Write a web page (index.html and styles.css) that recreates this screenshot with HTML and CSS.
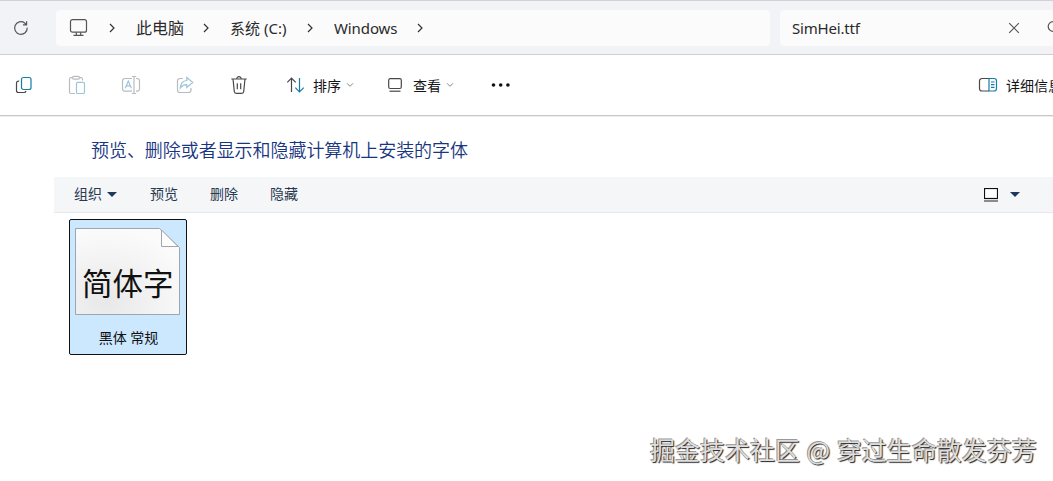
FILE: index.html
```html
<!DOCTYPE html>
<html lang="zh-CN">
<head>
  <meta charset="UTF-8">
  <title>Fonts</title>
  <link rel="stylesheet" href="styles.css">
</head>
<body>
  <header class="nav-bar">
    <svg class="refresh" width="16" height="16" viewBox="0 0 16 16"><path d="M14.2 7.6A6.3 6.3 0 1 1 11.7 3l1.8 1.8M13.6 1.3v3.6H10"/></svg>
    <div class="address">
      <svg class="pc" width="20" height="20" viewBox="0 0 20 20"><rect x="2.5" y="1.7" width="16" height="12.5" rx="2"/><path d="M8.3 14.2v3M12.7 14.2v3M5.5 17.3h10"/></svg>
      <svg class="chev" width="6" height="10" viewBox="0 0 6 10"><path d="M1 1l4 4-4 4"/></svg>
      <span class="crumb crumb-pc">此电脑</span>
      <svg class="chev" width="6" height="10" viewBox="0 0 6 10"><path d="M1 1l4 4-4 4"/></svg>
      <span class="crumb crumb-drive">系统 (C:)</span>
      <svg class="chev" width="6" height="10" viewBox="0 0 6 10"><path d="M1 1l4 4-4 4"/></svg>
      <span class="crumb crumb-win">Windows</span>
      <svg class="chev" width="6" height="10" viewBox="0 0 6 10"><path d="M1 1l4 4-4 4"/></svg>
    </div>
    <div class="search">
      <span class="query">SimHei.ttf</span>
      <svg class="clear" width="12" height="12" viewBox="0 0 12 12"><path d="M1.2 1.2l9.6 9.6M10.8 1.2l-9.6 9.6"/></svg>
      <svg class="magnifier" width="16" height="16" viewBox="0 0 16 16"><circle cx="6" cy="6.5" r="4.8"/><path d="M9.5 10l5 5"/></svg>
    </div>
  </header>

  <div class="toolbar">
    <svg class="tool copy" width="18" height="18" viewBox="0 0 18 18"><path class="dark" d="M4.2 5.2H3.5a2 2 0 0 0-2 2v7.3a2 2 0 0 0 2 2H9a2 2 0 0 0 2-1.5"/><rect class="blue" x="6.5" y="1.5" width="9.5" height="12" rx="2"/></svg>
    <svg class="tool" width="18" height="20" viewBox="0 0 18 20"><path class="pale" d="M7 18.500H3A1.500 1.500 0 0 1 1.500 17V4.200A1.500 1.500 0 0 1 3 2.700h1.500M11.500 2.700H13a1.500 1.500 0 0 1 1.500 1.500v1.300"/><rect class="pale" x="4.500" y="1.300" width="7" height="2.800" rx="1.400"/><rect class="pale-blue" x="8.500" y="7.300" width="8" height="11.200" rx="1.300"/></svg>
    <svg class="tool" width="20" height="20" viewBox="0 0 20 20"><path class="pale" d="M11 16.200H4a2.500 2.500 0 0 1-2.500-2.500V6A2.500 2.500 0 0 1 4 3.500h7M15 3.500h1A2.500 2.500 0 0 1 18.500 6v7.700a2.500 2.500 0 0 1-2.500 2.500h-1M10.800 1.500h4.400M10.800 18.500h4.400M13 1.500v17"/><path class="pale-blue" d="M4.200 13.300L7.300 6l3.100 7.300M5.300 10.800h4"/></svg>
    <svg class="tool" width="18" height="18" viewBox="0 0 18 18"><path class="pale" d="M7 2.500H4A2.500 2.500 0 0 0 1.500 5v9A2.500 2.500 0 0 0 4 16.500h8.500A2.500 2.500 0 0 0 15 14v-2"/><path class="pale-blue" d="M10.800 1.500l6 5-6 5V8.700C7.500 8.500 6 9.500 4.300 12c.3-4.300 2.500-7.200 6.500-7.500z"/></svg>
    <svg class="tool" width="18" height="20" viewBox="0 0 18 20"><path class="dark" d="M1.300 4h15.400M6.700 4a2.300 2.300 0 0 1 4.600 0M3 4l1.300 12.500a2 2 0 0 0 2 1.800h5.400a2 2 0 0 0 2-1.800L15 4M7.300 8.200v6M10.700 8.200v6"/></svg>
    <i class="divider"></i>
    <svg class="sort" width="20" height="18" viewBox="0 0 20 18"><path class="dark" d="M5.500 16V2.200M1.300 6.300l4.200-4.200 4.200 4.200"/><path class="blue" d="M13.500 2v13.800M9.300 11.700l4.200 4.200 4.200-4.200"/></svg>
    <span class="tool-text">排序</span>
    <svg class="drop" width="8" height="6" viewBox="0 0 8 6"><path d="M1 1.300l3 3 3-3"/></svg>
    <svg class="view" width="16" height="16" viewBox="0 0 16 16"><rect class="dark" x="1.700" y="1.700" width="12.600" height="9.800" rx="1.500"/><path class="dark" d="M2.500 14.200h11"/></svg>
    <span class="tool-text">查看</span>
    <svg class="drop" width="8" height="6" viewBox="0 0 8 6"><path d="M1 1.300l3 3 3-3"/></svg>
    <i class="divider divider-more"></i>
    <svg class="more" width="20" height="4" viewBox="0 0 20 4"><circle cx="2.500" cy="2" r="1.800"/><circle cx="9.700" cy="2" r="1.800"/><circle cx="16.900" cy="2" r="1.800"/></svg>
    <div class="details">
      <svg width="20" height="16" viewBox="0 0 20 16"><path class="dark" d="M11 1.500H4A2.500 2.500 0 0 0 1.500 4v7.500A2.500 2.500 0 0 0 4 14h7"/><path class="blue" d="M11 1.500h5A2.500 2.500 0 0 1 18.500 4v7.500A2.500 2.500 0 0 1 16 14h-5zM13 5h3.500M13 7.700h3.500M13 10.400h3.500"/></svg>
      <span class="tool-text">详细信息</span>
    </div>
  </div>

  <main class="content">
    <h1>预览、删除或者显示和隐藏计算机上安装的字体</h1>
    <div class="commands">
      <span class="organize">组织</span>
      <i class="triangle"></i>
      <span>预览</span>
      <span>删除</span>
      <span>隐藏</span>
      <svg class="view-mode" width="14" height="14" viewBox="0 0 14 14"><rect x=".5" y=".5" width="13" height="10"/><path d="M0 13h14"/></svg>
      <i class="triangle triangle-view"></i>
    </div>
    <div class="font-item">
      <div class="sheet">
        <svg class="page" width="108" height="90" viewBox="0 0 108 90">
          <defs>
            <radialGradient id="paper" cx=".3" cy=".85" r=".85">
              <stop offset="0" stop-color="#e9e8e9"/>
              <stop offset="1" stop-color="#fbfbfb"/>
            </radialGradient>
          </defs>
          <path d="M1.500 1.500h84l20 19v67h-104z" fill="url(#paper)" stroke="#9aa7b3"/>
          <path d="M87.500 3v16.500H104z" fill="#fdfdfd" stroke="#a5a5a8"/>
        </svg>
        <span class="sample">简体字</span>
      </div>
      <div class="font-name">黑体 常规</div>
    </div>
  </main>
  <div class="watermark">掘金技术社区 @ 穿过生命散发芬芳</div>
</body>
</html>
```
FILE: styles.css
```css
* { box-sizing: border-box; }
body {
  margin: 0;
  width: 1053px;
  height: 481px;
  overflow: hidden;
  position: relative;
  background: #fff;
  color: #2a2a2a;
  font-family: "Noto Sans", "Noto Sans CJK SC", sans-serif;
}
svg { display: block; flex: none; fill: none; stroke: #555; stroke-width: 1.2; }
span { white-space: nowrap; }

.nav-bar {
  display: flex;
  height: 55px;
  padding-top: 9px;
  background: #f2f3f6;
  border-top: 1px solid #d2d2d5;
  border-bottom: 1px solid #cfcfd1;
}
.refresh { margin: 10px 27px 0 13px; }
.address {
  display: flex; align-items: center;
  width: 714px; height: 36px; flex: none;
  padding-left: 12px;
  background: #fbfbfc; border-radius: 4px;
}
.chev { margin: 0 21px; stroke: #333; }
.crumb { flex: none; font-size: 15px; line-height: 20px; }
.crumb-pc { width: 46px; font-size: 16px; }
.crumb-drive { width: 56px; }
.crumb-win { width: 62px; letter-spacing: -.1px; }
.search {
  display: flex; align-items: center; flex: none;
  width: 290px; height: 36px; margin-left: 10px; padding-left: 12px;
  background: #fbfbfc; border-radius: 4px;
}
.query { width: 216px; font-size: 15px; letter-spacing: -.2px; }
.magnifier { margin-left: 27px; }

.toolbar {
  display: flex; align-items: center;
  height: 61px;
  padding-left: 15px;
  border-bottom: 1px solid #c8c8c8;
  box-shadow: 0 1px 0 #eee;
}
.tool { margin-right: 36px; }
.tool:nth-child(1), .tool:nth-child(2), .tool:nth-child(3) { margin-right: 35px; }
.tool:nth-child(5) { margin-right: 20px; }
.toolbar .dark { stroke: #484848; }
.toolbar .blue { stroke: #167da8; }
.toolbar .pale { stroke: #b8bcc0; }
.toolbar .pale-blue { stroke: #9cc5da; }
.divider { width: 1px; height: 36px; background: #e6e6e6; }
.sort { margin: 0 7px 0 18px; }
.tool-text { padding-top: 1px; font-size: 14px; line-height: 20px; color: #151515; }
.drop { margin-left: 5px; stroke: #888; stroke-width: 1; }
.view { margin: 0 10px 0 33px; }
.divider-more { margin-left: 19px; }
.more { margin-left: 18px; fill: #111; stroke: none; }
.details { display: flex; align-items: center; gap: 8px; margin-left: 467px; }

.content { padding-left: 54px; }
h1 {
  margin: 0; padding: 21px 0 0 37px;
  height: 61px;
  font-size: 18px; font-weight: 350; line-height: 26px; letter-spacing: -.05px;
  color: #173580;
}
.commands {
  display: flex; align-items: center;
  height: 36px; padding-left: 20px;
  background: #f4f6f8;
  border-bottom: 1px solid #e5e8ec;
  font-size: 14px; color: #2a3850;
}
.commands span { margin-right: 32px; padding-bottom: 3px; }
.commands .organize { margin-right: 5px; }
.triangle {
  margin-right: 33px;
  border: 5px solid transparent;
  border-top-color: #1d3761; border-bottom: 0;
}
.view-mode { margin-left: 654px; stroke: #222; stroke-width: 1; }
.view-mode rect { fill: #fff; stroke: #111; stroke-width: 1.2; }
.triangle-view { margin: 0 0 0 12px; }

.font-item {
  width: 118px; height: 136px;
  margin: 6px 0 0 15px; padding: 7px 0 0 4px;
  background: #cce8ff;
  border: 1px solid #111; border-radius: 2px;
}
.sheet { display: grid; width: 108px; height: 90px; }
.sheet > * { grid-area: 1 / 1; }
.page { stroke-width: 1; }
.sample { padding: 34px 0 0 8px; font-size: 30.5px; line-height: 44px; color: #111; }
.font-name { margin: 11px 3px 0 0; font-size: 14px; line-height: 20px; text-align: center; color: #111; }

.watermark {
  position: absolute; left: 650px; top: 431px;
  font-family: "Noto Sans CJK SC", sans-serif;
  font-size: 25px; line-height: 36px; white-space: nowrap;
  word-spacing: 1px;
  color: #dedede;
  text-shadow: 1px 1px 1px #222, -1px -1px 0 #999;
}
```
